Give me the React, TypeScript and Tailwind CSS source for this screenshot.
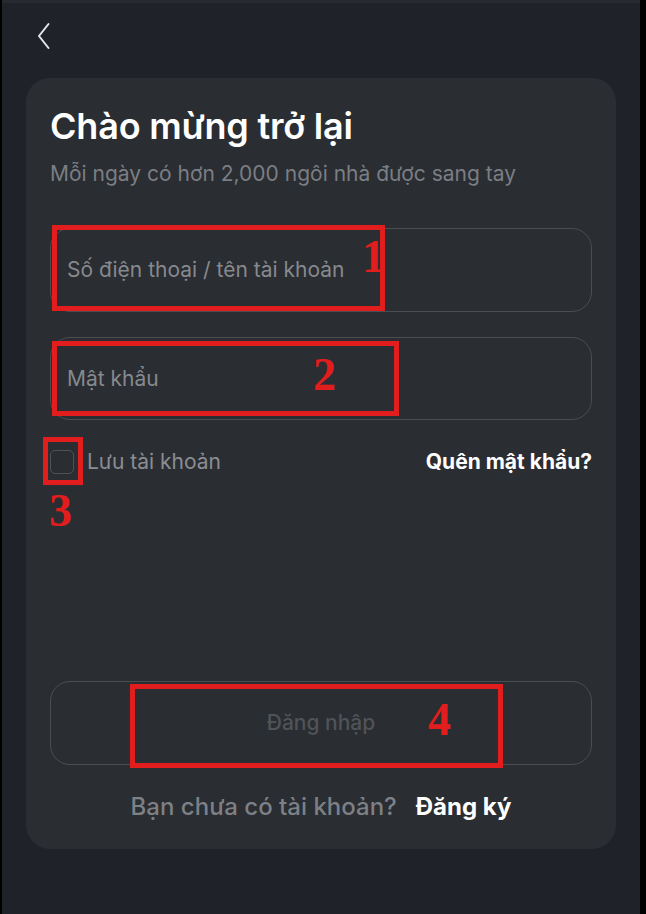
import React from "react";

const font = { fontFamily: "Inter, 'Noto Sans', sans-serif" };

function RedBox({ x, y, w, h }: { x: number; y: number; w: number; h: number }) {
  return (
    <div
      className="absolute border-[5px] border-[#e11d1d]"
      style={{ left: x, top: y, width: w, height: h }}
    />
  );
}

function RedNum({ x, y, n }: { x: number; y: number; n: string }) {
  return (
    <div
      className="absolute text-[#e11d1d] font-bold text-[46px] leading-none"
      style={{ left: x, top: y, fontFamily: "'Liberation Serif', serif" }}
    >
      {n}
    </div>
  );
}

export default function App() {
  return (
    <div className="relative w-[646px] h-[914px] flex bg-black overflow-hidden" style={font}>
      <div className="w-[2px] shrink-0 bg-black" />
      <div className="w-[638px] shrink-0 flex flex-col bg-[#1f2329]">
        <div className="h-[3px] bg-[#272a2f]" />
        <div className="h-[75px] pl-[33px] pt-[18px]">
          <svg width="18" height="30" viewBox="0 0 18 30" fill="none">
            <path d="M13.5 3 L4 15 L13.5 27" stroke="#e5e7eb" strokeWidth="2" strokeLinecap="round" strokeLinejoin="round" />
          </svg>
        </div>
        <div className="ml-[24px] w-[590px] h-[771px] rounded-[24px] bg-[#2a2d32] px-6 flex flex-col">
          <h1 className="mt-[26px] text-[36px] leading-[44px] font-semibold text-white tracking-[-0.2px]">
            Chào mừng trở lại
          </h1>
          <p className="mt-[12px] text-[21px] leading-[28px] text-[#7b7e83]">
            Mỗi ngày có hơn 2,000 ngôi nhà được sang tay
          </p>
          <div className="mt-[40px] h-[84px] rounded-[20px] border border-[#4a4d52] flex items-center px-4">
            <span className="text-[21px] text-[#86898e]">Số điện thoại / tên tài khoản</span>
          </div>
          <div className="mt-[25px] h-[83px] rounded-[20px] border border-[#4a4d52] flex items-center px-4">
            <span className="text-[21px] text-[#86898e]">Mật khẩu</span>
          </div>
          <div className="mt-[30px] h-[24px] flex items-center justify-between">
            <div className="flex items-center gap-[13px]">
              <div className="w-[24px] h-[24px] rounded-[5px] border border-[#4e5156]" />
              <span className="text-[21px] text-[#8a8d92]">Lưu tài khoản</span>
            </div>
            <span className="text-[21px] font-bold text-white">Quên mật khẩu?</span>
          </div>
          <div className="mt-[207px] h-[84px] rounded-[20px] border border-[#4a4d52] flex items-center justify-center">
            <span className="text-[21px] font-medium text-[#505358]">Đăng nhập</span>
          </div>
          <div className="mt-[27px] h-[29px] flex items-center justify-center gap-[19px]">
            <span className="text-[24px] font-medium text-[#7d8085]">Bạn chưa có tài khoản?</span>
            <span className="text-[24px] font-bold text-white">Đăng ký</span>
          </div>
        </div>
      </div>
      <div className="w-[6px] shrink-0 bg-black" />

      <RedBox x={52} y={225} w={333} h={86} />
      <RedNum x={362} y={234} n="1" />
      <RedBox x={52} y={341} w={347} h={75} />
      <RedNum x={313} y={352} n="2" />
      <RedBox x={43} y={437} w={40} h={48} />
      <RedNum x={49} y={488} n="3" />
      <RedBox x={130} y={684} w={373} h={84} />
      <RedNum x={428} y={697} n="4" />
    </div>
  );
}
